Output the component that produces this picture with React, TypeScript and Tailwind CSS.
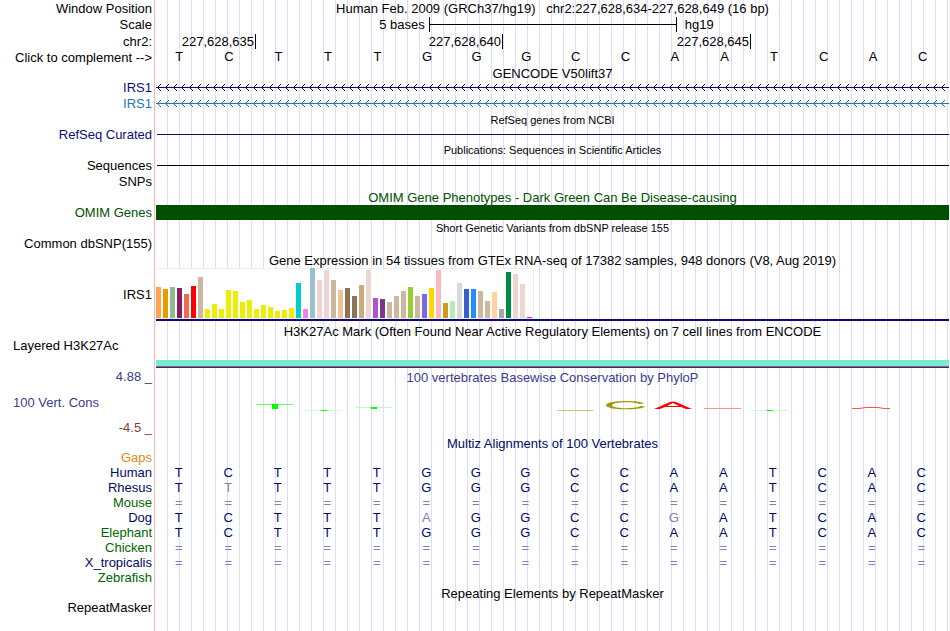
import type { ReactNode } from 'react';

interface TrackRowProps {
  label?: ReactNode;
  height?: string;
  color?: string;
  children?: ReactNode;
}

const SEQUENCE = 'TCTTTGGGCCAATCAC';

const SPECIES = [
  { name: 'Gaps', color: 'text-[#e08a10]', bases: '' },
  { name: 'Human', color: 'text-[#000a64]', bases: 'TCTTTGGGCCAATCAC' },
  { name: 'Rhesus', color: 'text-[#000a64]', bases: 'TTTTTGGGCCAATCAC' },
  { name: 'Mouse', color: 'text-[#006400]', bases: '================' },
  { name: 'Dog', color: 'text-[#000a64]', bases: 'TCTTTAGGCCGATCAC' },
  { name: 'Elephant', color: 'text-[#006400]', bases: 'TCTTTGGGCCAATCAC' },
  { name: 'Chicken', color: 'text-[#006400]', bases: '================' },
  { name: 'X_tropicalis', color: 'text-[#000a64]', bases: '================' },
  { name: 'Zebrafish', color: 'text-[#006400]', bases: '' },
];

// Bar height and colour for each GTEx tissue
const TISSUES: [number, string][] = [
  [31, '#ffa54f'], [29, '#ee9a00'], [31, '#8fbc8f'], [30, '#8b1c62'], [24, '#ee6a50'], [32, '#ff0000'],
  [41, '#cdb79e'], [9, '#eeee00'], [14, '#eeee00'], [9, '#eeee00'], [28, '#eeee00'], [27, '#eeee00'],
  [16, '#eeee00'], [18, '#eeee00'], [9, '#eeee00'], [13, '#eeee00'], [11, '#eeee00'], [7, '#eeee00'],
  [8, '#eeee00'], [10, '#eeee00'], [35, '#00cdcd'], [9, '#ee82ee'], [50, '#9ac0cd'], [38, '#eed5d2'],
  [48, '#eed5d2'], [38, '#cdb79e'], [28, '#eec591'], [30, '#8b7355'], [22, '#8b7355'], [33, '#cdaa7d'],
  [48, '#eed5d2'], [20, '#b452cd'], [19, '#7a378b'], [16, '#cdb79e'], [22, '#cdb79e'], [27, '#cdb79e'],
  [31, '#9acd32'], [22, '#cdb79e'], [24, '#7a67ee'], [30, '#ffd700'], [48, '#ffb6c1'], [15, '#cd9b1d'],
  [17, '#b4eeb4'], [35, '#d9d9d9'], [29, '#3a5fcd'], [29, '#1e90ff'], [27, '#cdb79e'], [17, '#cdb79e'],
  [26, '#ffd39b'], [9, '#a6a6a6'], [46, '#008b45'], [44, '#eed5d2'], [34, '#eed5d2'], [1, '#ff00ff'],
];

function TrackRow({ label, height = 'h-[15px]', color = 'text-black', children }: TrackRowProps) {
  return (
    <div className={`flex ${height}`}>
      <div className={`flex w-[155px] shrink-0 items-center justify-end border-r border-[#ffb4b4] pr-0.5 ${color}`}>
        {label}
      </div>
      <div className="ml-px flex min-w-0 flex-1 flex-col justify-center">{children}</div>
    </div>
  );
}

function TitleRow({ children, color = 'text-black', small = false, height = 'h-4' }: TrackRowProps & { small?: boolean }) {
  return (
    <TrackRow height={height}>
      <h2 className={`pt-px text-center ${small ? 'text-[11px]' : ''} ${color}`}>{children}</h2>
    </TrackRow>
  );
}

function GeneLine({ id, color }: { id: string; color: string }) {
  return (
    <svg className="h-[7px] w-full" shapeRendering="crispEdges">
      <defs>
        <pattern id={id} width="8" height="7" patternUnits="userSpaceOnUse">
          <path
            d="M1 3h1v1h-1zM2 2h1v1h-1zM2 4h1v1h-1zM3 1h1v1h-1zM3 5h1v1h-1zM4 0h1v1h-1zM4 6h1v1h-1zM0 3h8v1h-8z"
            fill={color}
          />
        </pattern>
      </defs>
      <rect width="100%" height="7" fill={`url(#${id})`} />
    </svg>
  );
}

function PositionMark({ children, width }: { children: string; width: string }) {
  return (
    <div className={`flex items-center justify-end border-r border-black pr-px ${width}`}>{children}</div>
  );
}

function ConservationPlot() {
  return (
    <svg className="h-4 w-full" viewBox="0 0 793 16" preserveAspectRatio="none">
      <rect x="101" y="6" width="36" height="1" fill="#5cff5c" />
      <rect x="116" y="6" width="6" height="5" fill="#00ff00" />
      <rect x="150" y="12" width="36" height="1" fill="#ccffcc" />
      <rect x="165" y="12" width="6" height="1" fill="#00ff00" />
      <rect x="200" y="9" width="36" height="1" fill="#b4ffb4" />
      <rect x="215" y="9" width="6" height="2" fill="#00ff00" />
      <rect x="401" y="12" width="36" height="1" fill="#c8c878" />
      <path
        d="M488 5.500C485 2 450 2 450 7.200C450 12.500 486 12.500 489 8.500L484 8C482 11 456 11 456 7.200C456 3.500 480 3.500 483 6Z"
        fill="#a09b00"
      />
      <path d="M498 11L514 4L517 3.500L520 4L536 11H530L525 9H509L504 11ZM511 8H523L517 5Z" fill="#ff0000" fillRule="evenodd" />
      <rect x="548" y="10" width="37" height="1" fill="#ff9090" />
      <rect x="596" y="12" width="36" height="1" fill="#ccffcc" />
      <rect x="611" y="12" width="6" height="1" fill="#00ff00" />
      <path d="M696 10.500H703L710 9.500H722L728 10.500H734" fill="none" stroke="#ff5050" />
    </svg>
  );
}

function Alignments() {
  return (
    <div className="pr-0.5">
      <table className="w-full table-fixed border-separate border-spacing-0">
        <tbody>
          {SPECIES.map((row) => (
            <tr key={row.name} className="h-[15px]">
              <th scope="row" className={`w-[155px] border-r border-[#ffb4b4] p-0 pr-0.5 text-right font-normal ${row.color}`}>
                {row.name}
              </th>
              {SEQUENCE.split('').map((base, i) => (
                <td
                  key={i}
                  className={`p-0 pr-0.5 text-center ${row.bases[i] === base ? 'text-[#000a64]' : 'text-[#8080b4]'}`}
                >
                  {row.bases[i]}
                </td>
              ))}
            </tr>
          ))}
        </tbody>
      </table>
    </div>
  );
}

export default function App() {
  return (
    <main className="min-h-screen bg-white bg-[repeating-linear-gradient(to_right,transparent_0_11px,#dcdcff_11px_12px)] bg-[position:156px_0] bg-no-repeat pr-px font-['Liberation_Sans',Arial,sans-serif] text-[13px] leading-[15px] text-black">
      <TrackRow label="Window Position" height="h-4">
        <h1 className="text-center whitespace-pre">
          Human Feb. 2009 (GRCh37/hg19){'   '}chr2:227,628,634-227,628,649 (16 bp)
        </h1>
      </TrackRow>

      <TrackRow label="Scale" height="h-[17px]">
        <div className="flex items-center justify-center gap-1 pr-3">
          <span>5 bases</span>
          <div className="flex h-[15px] w-[248px] items-center border-x border-black">
            <div className="h-px w-full bg-black" />
          </div>
          <span className="ml-1">hg19</span>
        </div>
      </TrackRow>

      <TrackRow label="chr2:" height="h-4">
        <div className="flex h-[15px]">
          <PositionMark width="w-[100px]">227,628,635</PositionMark>
          <PositionMark width="w-[247px]">227,628,640</PositionMark>
          <PositionMark width="w-[248px]">227,628,645</PositionMark>
        </div>
      </TrackRow>

      <TrackRow label={<button className="cursor-pointer">Click to complement --&gt;</button>} height="h-4">
        <div className="grid grid-cols-16 pb-px text-center">
          {SEQUENCE.split('').map((base, i) => (
            <span key={i} className="pr-[3px]">{base}</span>
          ))}
        </div>
      </TrackRow>

      <TitleRow height="h-[15px]">GENCODE V50lift37</TitleRow>
      <TrackRow label="IRS1" color="text-[#0c0c78]">
        <GeneLine id="coding" color="#0c0c78" />
      </TrackRow>
      <TrackRow label="IRS1" color="text-[#1e78b4]" height="h-[17px]">
        <GeneLine id="noncoding" color="#1e78b4" />
      </TrackRow>

      <TitleRow small height="h-[15px]">RefSeq genes from NCBI</TitleRow>
      <TrackRow label="RefSeq Curated" color="text-[#0c0c78]">
        <div className="ml-px h-px bg-[#0c0c78]" />
      </TrackRow>

      <TitleRow small>Publications: Sequences in Scientific Articles</TitleRow>
      <TrackRow label="Sequences">
        <div className="ml-px h-px bg-black" />
      </TrackRow>
      <TrackRow label="SNPs" height="h-4" />

      <TitleRow color="text-[#005000]">OMIM Gene Phenotypes - Dark Green Can Be Disease-causing</TitleRow>
      <TrackRow label="OMIM Genes" color="text-[#005000]">
        <div className="h-full bg-[#005000]" />
      </TrackRow>

      <TitleRow small>Short Genetic Variants from dbSNP release 155</TitleRow>
      <TrackRow label="Common dbSNP(155)" />

      <TitleRow height="h-[17px]">
        Gene Expression in 54 tissues from GTEx RNA-seq of 17382 samples, 948 donors (V8, Aug 2019)
      </TitleRow>
      <TrackRow label="IRS1" height="h-[53px]">
        <div className="flex h-[51px] w-[378px] items-end gap-0.5 border-y border-r border-[#eeeeee] bg-white">
          {TISSUES.map(([height, color], i) => (
            <div key={i} className="w-[5px] shrink-0" style={{ height, backgroundColor: color }} />
          ))}
        </div>
        <div className="h-0.5 bg-[#0c0c78]" />
      </TrackRow>

      <TitleRow height="h-[19px]">
        H3K27Ac Mark (Often Found Near Active Regulatory Elements) on 7 cell lines from ENCODE
      </TitleRow>
      <div className="flex h-7">
        <div className="w-[155px] border-r border-[#ffb4b4] pl-[13px] leading-[11px]">Layered H3K27Ac</div>
        <div className="ml-px flex flex-1 flex-col justify-end">
          <div className="h-1.5 bg-[#78ebcd]" />
          <div className="h-px bg-[#7864aa]" />
          <div className="h-px bg-[#502850]" />
        </div>
      </div>

      <div className="flex h-[67px]">
        <div className="flex w-[155px] flex-col justify-between border-r border-[#ffb4b4] pt-px pr-0.5 text-right text-[#3c3c8c]">
          <span>4.88 _</span>
          <span className="pl-[13px] text-left">100 Vert. Cons</span>
          <span className="text-[#8c3c3c]">-4.5 _</span>
        </div>
        <div className="ml-px flex flex-1 flex-col gap-[13px] pt-0.5">
          <h2 className="text-center text-[#3c3c8c]">100 vertebrates Basewise Conservation by PhyloP</h2>
          <ConservationPlot />
        </div>
      </div>

      <TitleRow color="text-[#000a64]" height="h-[15px]">Multiz Alignments of 100 Vertebrates</TitleRow>
      <Alignments />

      <TitleRow height="h-[15px]">Repeating Elements by RepeatMasker</TitleRow>
      <TrackRow label="RepeatMasker" />
      <TrackRow height="h-4" />
    </main>
  );
}
